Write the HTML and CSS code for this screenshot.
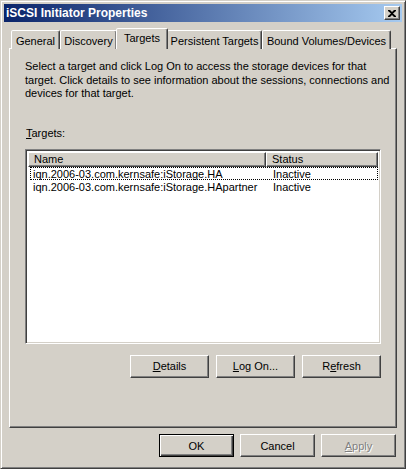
FILE: index.html
```html
<!DOCTYPE html>
<html>
<head>
<meta charset="utf-8">
<link rel="stylesheet" href="styles.css">
</head>
<body>
<div class="window">
  <div class="titlebar">
    <span class="title">iSCSI Initiator Properties</span>
    <span class="close"><svg width="8" height="7" viewBox="0 0 8 7"><path d="M0 0h2l2 2 2-2h2v1L5 3.5 8 6v1H6L4 5 2 7H0V6l3-2.5L0 1z" fill="#000"/></svg></span>
  </div>
  <div class="tabs">
    <div class="tab t-general">General</div>
    <div class="tab t-discovery">Discovery</div>
    <div class="tab t-targets selected">Targets</div>
    <div class="tab t-persistent">Persistent Targets</div>
    <div class="tab t-bound">Bound Volumes/Devices</div>
  </div>
  <div class="panel">
    <p class="desc">Select a target and click Log On to access the storage devices for that target. Click details to see information about the sessions, connections and devices for that target.</p>
    <div class="label"><u>T</u>argets:</div>
    <div class="list">
      <div class="lhead">
        <div class="hcell hname">Name</div>
        <div class="hcell hstatus">Status</div>
      </div>
      <div class="row focus"><span class="c1">iqn.2006-03.com.kernsafe:iStorage.HA</span><span class="c2">Inactive</span></div>
      <div class="row"><span class="c1">iqn.2006-03.com.kernsafe:iStorage.HApartner</span><span class="c2">Inactive</span></div>
    </div>
    <div class="btnrow">
      <div class="btn wide"><u>D</u>etails</div>
      <div class="btn wide"><u>L</u>og On...</div>
      <div class="btn wide">R<u>e</u>fresh</div>
    </div>
  </div>
  <div class="footer">
    <div class="btn default">OK</div>
    <div class="btn">Cancel</div>
    <div class="btn disabled"><u>A</u>pply</div>
  </div>
</div>
</body>
</html>
```

FILE: styles.css
```css
html, body {
  margin: 0;
  padding: 0;
  background: #d4d0c8;
}
body {
  font-family: "Liberation Sans", Arial, sans-serif;
  font-size: 11px;
  color: #000;
}
.window {
  width: 406px;
  height: 469px;
  box-sizing: border-box;
  background: #d4d0c8;
  border: 1px solid;
  border-color: #d4d0c8 #404040 #404040 #d4d0c8;
  box-shadow: inset 1px 1px #fff, inset -1px -1px #808080;
  padding: 3px 3px;
  display: flex;
  flex-direction: column;
}
.titlebar {
  height: 18px;
  background: linear-gradient(to right, #0a246a, #a6caf0);
  display: flex;
  align-items: center;
  justify-content: space-between;
  padding: 0 2px 0 2px;
}
.title {
  color: #fff;
  font-weight: bold;
  font-size: 12px;
  letter-spacing: 0;
}
.close {
  width: 16px;
  height: 14px;
  box-sizing: border-box;
  background: #d4d0c8;
  border: 1px solid;
  border-color: #fff #404040 #404040 #fff;
  box-shadow: inset -1px -1px #808080;
  display: flex;
  align-items: center;
  justify-content: center;
  padding-right: 1px;
}
.tabs {
  display: flex;
  align-items: flex-end;
  height: 21px;
  margin-top: 6px;
  padding-left: 7px;
  position: relative;
  z-index: 2;
  margin-bottom: -1px;
}
.tab {
  height: 19px;
  box-sizing: border-box;
  border: 1px solid;
  border-bottom: none;
  border-color: #fff #404040 transparent #fff;
  border-radius: 2px 2px 0 0;
  box-shadow: inset -1px 0 #808080;
  display: flex;
  align-items: center;
  justify-content: center;
  padding-top: 1px;
  background: #d4d0c8;
}
.t-general { width: 49px; }
.t-discovery { width: 57px; }
.t-targets { width: 50px; }
.t-persistent { width: 95px; }
.t-bound { width: 129px; }
.tab.selected {
  height: 21px;
  margin: 0 -1px 0 -1px;
  width: 52px;
  padding-top: 0;
  padding-bottom: 3px;
  position: relative;
  z-index: 3;
}
.panel {
  margin: 0 5px 0 5px;
  height: 380px;
  box-sizing: border-box;
  border: 1px solid;
  border-color: #fff #404040 #404040 #fff;
  box-shadow: inset -1px -1px #808080;
  padding: 11px 15px 0 15px;
  display: flex;
  flex-direction: column;
}
.desc {
  margin: 0 -10px 0 0;
  line-height: 13.5px;
}
.label {
  margin-top: 26px;
  line-height: 13px;
  padding-left: 1px;
}
.list {
  margin-top: 9px;
  height: 195px;
  box-sizing: border-box;
  background: #fff;
  border: 1px solid;
  border-color: #808080 #fff #fff #808080;
  box-shadow: inset 1px 1px #404040, inset -1px -1px #d4d0c8;
  padding: 2px 2px;
}
.lhead {
  display: flex;
  height: 15px;
}
.hcell {
  box-sizing: border-box;
  background: #d4d0c8;
  border: 1px solid;
  border-color: #fff #404040 #404040 #fff;
  box-shadow: inset -1px -1px #808080;
  padding-left: 5px;
  line-height: 13px;
}
.hname { width: 238px; }
.hstatus { flex: 1; }
.row {
  display: flex;
  height: 13px;
  line-height: 12px;
  box-sizing: border-box;
  border: 1px dotted transparent;
  margin-left: 2px;
}
.row.focus {
  border-color: #000;
}
.c1 {
  width: 237px;
  padding-left: 2px;
}
.c2 {
  padding-left: 3px;
}
.btnrow {
  display: flex;
  justify-content: flex-end;
  gap: 7px;
  margin-top: 11px;
}
.btn {
  width: 75px;
  height: 23px;
  box-sizing: border-box;
  background: #d4d0c8;
  border: 1px solid;
  border-color: #fff #404040 #404040 #fff;
  box-shadow: inset -1px -1px #808080;
  display: flex;
  align-items: center;
  justify-content: center;
}
.btn.wide { width: 79px; }
.btn.default {
  border: 1px solid #000;
  box-shadow: inset 1px 1px #fff, inset -1px -1px #404040, inset -2px -2px #808080;
}
.btn.disabled {
  color: #808080;
  text-shadow: 1px 1px #fff;
}
.footer {
  display: flex;
  justify-content: flex-end;
  gap: 6px;
  padding: 6px 6px 0 0;
}
```
